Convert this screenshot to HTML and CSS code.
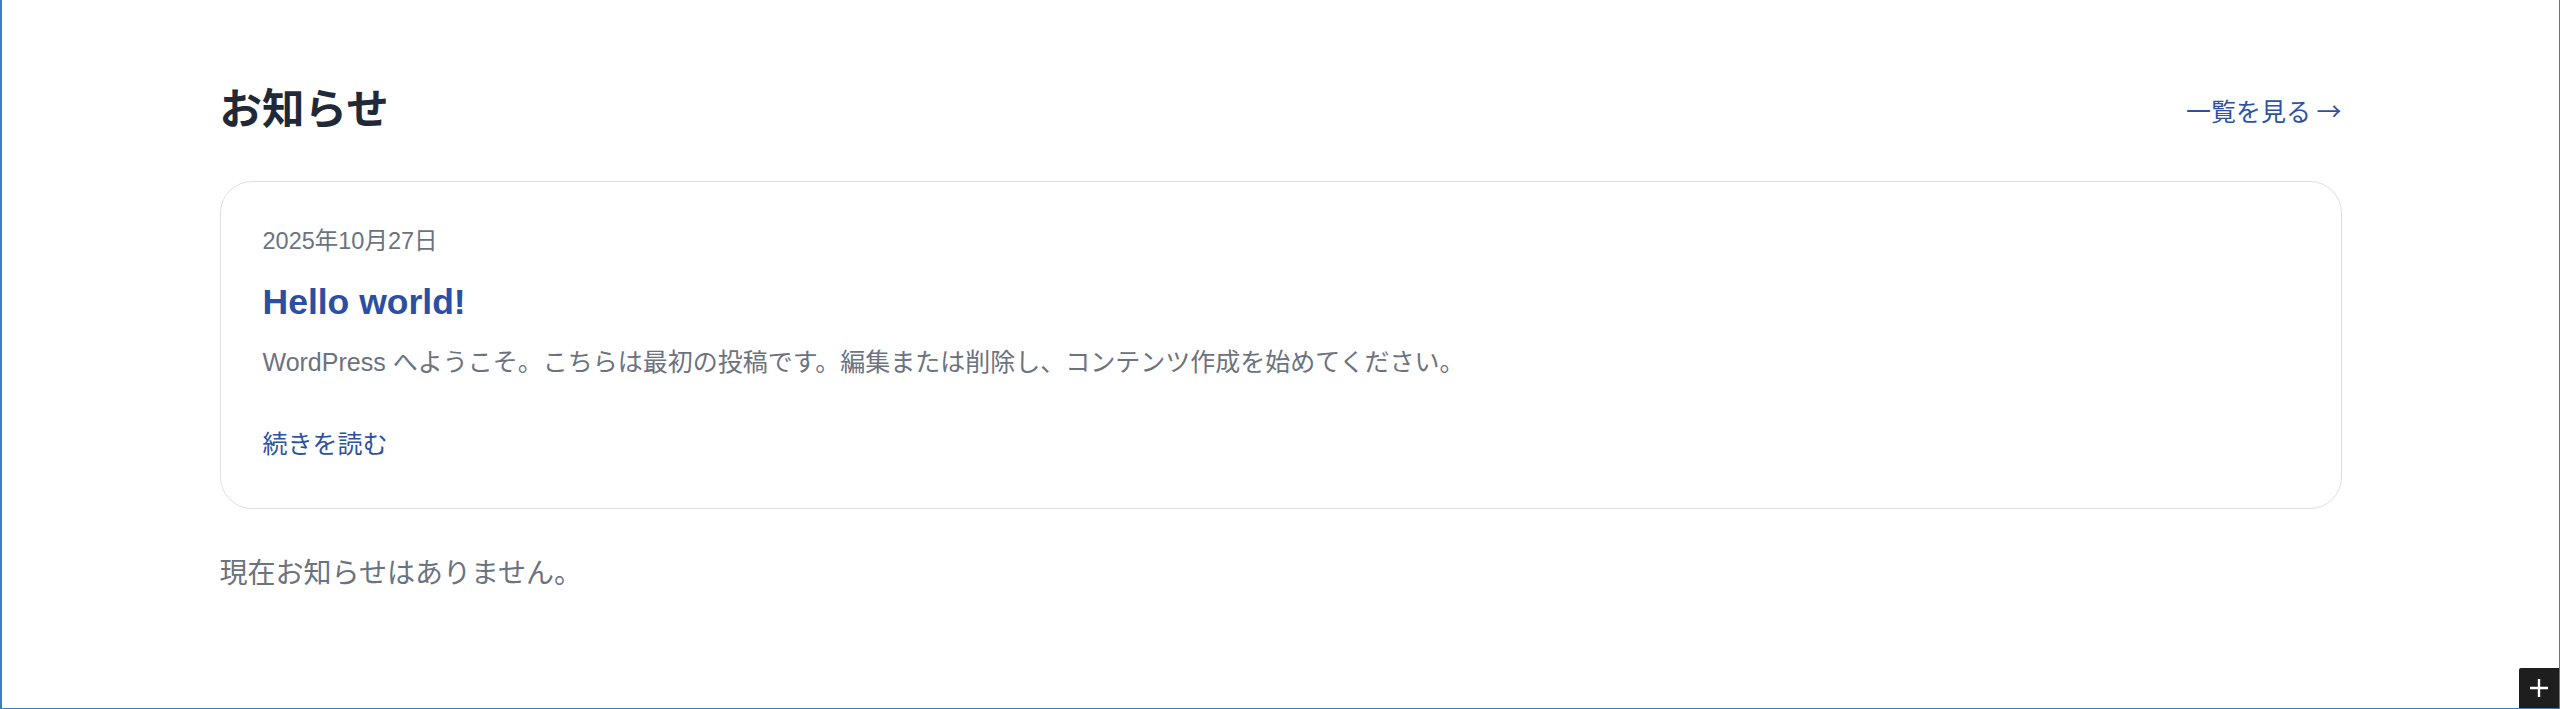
FILE: index.html
```html
<!DOCTYPE html>
<html lang="ja">
<head>
    <meta charset="UTF-8">
    <meta name="viewport" content="width=device-width, initial-scale=1.0">
    <title>お知らせ</title>
    <link rel="stylesheet" href="styles.css">
</head>
<body>

<div class="frame">
    <section class="news">
        <div class="news-header">
            <h2>お知らせ</h2>
            <a href="#" class="news-more">一覧を見る →</a>
        </div>

        <article class="news-card">
            <time class="news-date" datetime="2025-10-27">2025年10月27日</time>
            <h3 class="news-title"><a href="#">Hello world!</a></h3>
            <p class="news-excerpt">WordPress へようこそ。こちらは最初の投稿です。編集または削除し、コンテンツ作成を始めてください。</p>
            <a href="#" class="news-read">続きを読む</a>
        </article>

        <p class="news-empty">現在お知らせはありません。</p>
    </section>

    <button class="add-block" type="button" aria-label="追加">
        <svg width="20" height="20" viewBox="0 0 20 20">
            <path d="M10 1v18M1 10h18" stroke="#fff" stroke-width="2.4" fill="none"/>
        </svg>
    </button>
</div>

</body>
</html>
```

FILE: styles.css
```css
html, body {
    margin: 0;
    height: 100%;
}
body {
    font-family: "Liberation Sans", "Noto Sans CJK JP", sans-serif;
    background: #fff;
}
.frame {
    position: relative;
    box-sizing: border-box;
    height: 100%;
    border-left: 2px solid #3a7fc1;
    border-right: 1px solid #3a7fc1;
    border-bottom: 1px solid #3a7fc1;
    overflow: hidden;
}
.news {
    max-width: 2122px;
    margin: 0 auto;
    padding-top: 82px;
}
.news-header {
    display: flex;
    justify-content: space-between;
    align-items: center;
    margin-bottom: 43px;
}
.news-header h2 {
    margin: 0;
    font-size: 42.5px;
    line-height: 56px;
    font-weight: 700;
    color: #1f2937;
}
.news-more {
    font-family: "Noto Sans CJK JP", sans-serif;
    font-size: 25px;
    color: #2b52a3;
    text-decoration: none;
}
.news-card {
    border: 1px solid #dddfe4;
    border-radius: 32px;
    padding: 43px 42px 46px;
}
.news-date {
    display: block;
    font-size: 23.5px;
    line-height: 32px;
    color: #6b7280;
}
.news-title {
    margin: 23px 0 0;
    font-size: 35.5px;
    line-height: 45px;
    font-weight: 700;
}
.news-title a {
    color: #2a4fa3;
    text-decoration: none;
}
.news-excerpt {
    margin: 19px 0 0;
    font-size: 25px;
    line-height: 36px;
    color: #6b7280;
}
.news-read {
    display: inline-block;
    margin-top: 46px;
    font-size: 25px;
    line-height: 36px;
    color: #2b52a3;
    text-decoration: none;
}
.news-empty {
    margin: 46px 0 0;
    font-size: 28px;
    line-height: 38px;
    color: #6b7280;
}
.add-block {
    position: absolute;
    right: 0;
    bottom: 0;
    width: 40px;
    height: 40px;
    padding: 0;
    border: none;
    border-radius: 2px 0 0 0;
    background: #1e1e1e;
    display: flex;
    align-items: center;
    justify-content: center;
    cursor: pointer;
}
```
